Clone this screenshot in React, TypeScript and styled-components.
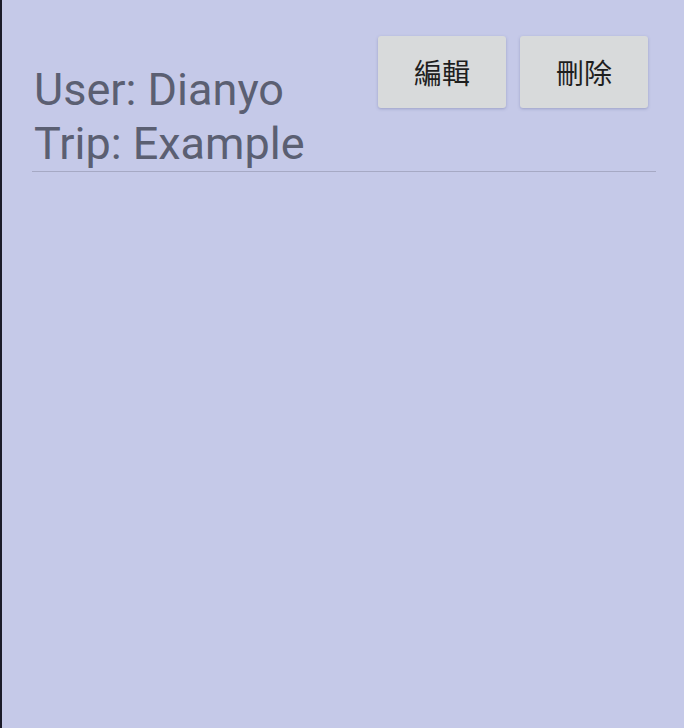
import React from 'react';
import styled, { createGlobalStyle } from 'styled-components';

const GlobalStyle = createGlobalStyle`
  html, body {
    margin: 0;
    padding: 0;
    height: 100%;
    background: #c5c9e8;
  }
  #root {
    height: 100%;
  }
`;

const Screen = styled.div`
  box-sizing: border-box;
  min-height: 728px;
  background: #c5c9e8;
  border-left: 2px solid #1b1b29;
  padding: 36px 28px 0 30px;
`;

const Header = styled.div`
  display: flex;
  justify-content: space-between;
  align-items: flex-start;
  border-bottom: 1px solid #a6a9c4;
`;

const Info = styled.div`
  display: flex;
  flex-direction: column;
  padding: 27px 0 0 2px;
`;

const InfoLine = styled.span`
  font-family: Roboto, "Noto Sans", sans-serif;
  font-size: 45px;
  line-height: 54px;
  color: #5b5f72;
`;

const Actions = styled.div`
  display: flex;
  gap: 14px;
  margin-right: 8px;
`;

const ActionButton = styled.button`
  width: 128px;
  height: 72px;
  border: none;
  border-radius: 3px;
  background: #d8dadb;
  box-shadow: 0 1px 3px rgba(80, 85, 140, 0.35);
  font-family: "Noto Sans CJK TC", "Noto Sans CJK SC", sans-serif;
  font-size: 28px;
  color: #1e1e1e;
  cursor: pointer;
`;

export default function App() {
  return (
    <>
      <GlobalStyle />
      <Screen>
        <Header>
          <Info>
            <InfoLine>User: Dianyo</InfoLine>
            <InfoLine>Trip: Example</InfoLine>
          </Info>
          <Actions>
            <ActionButton>編輯</ActionButton>
            <ActionButton>刪除</ActionButton>
          </Actions>
        </Header>
      </Screen>
    </>
  );
}
